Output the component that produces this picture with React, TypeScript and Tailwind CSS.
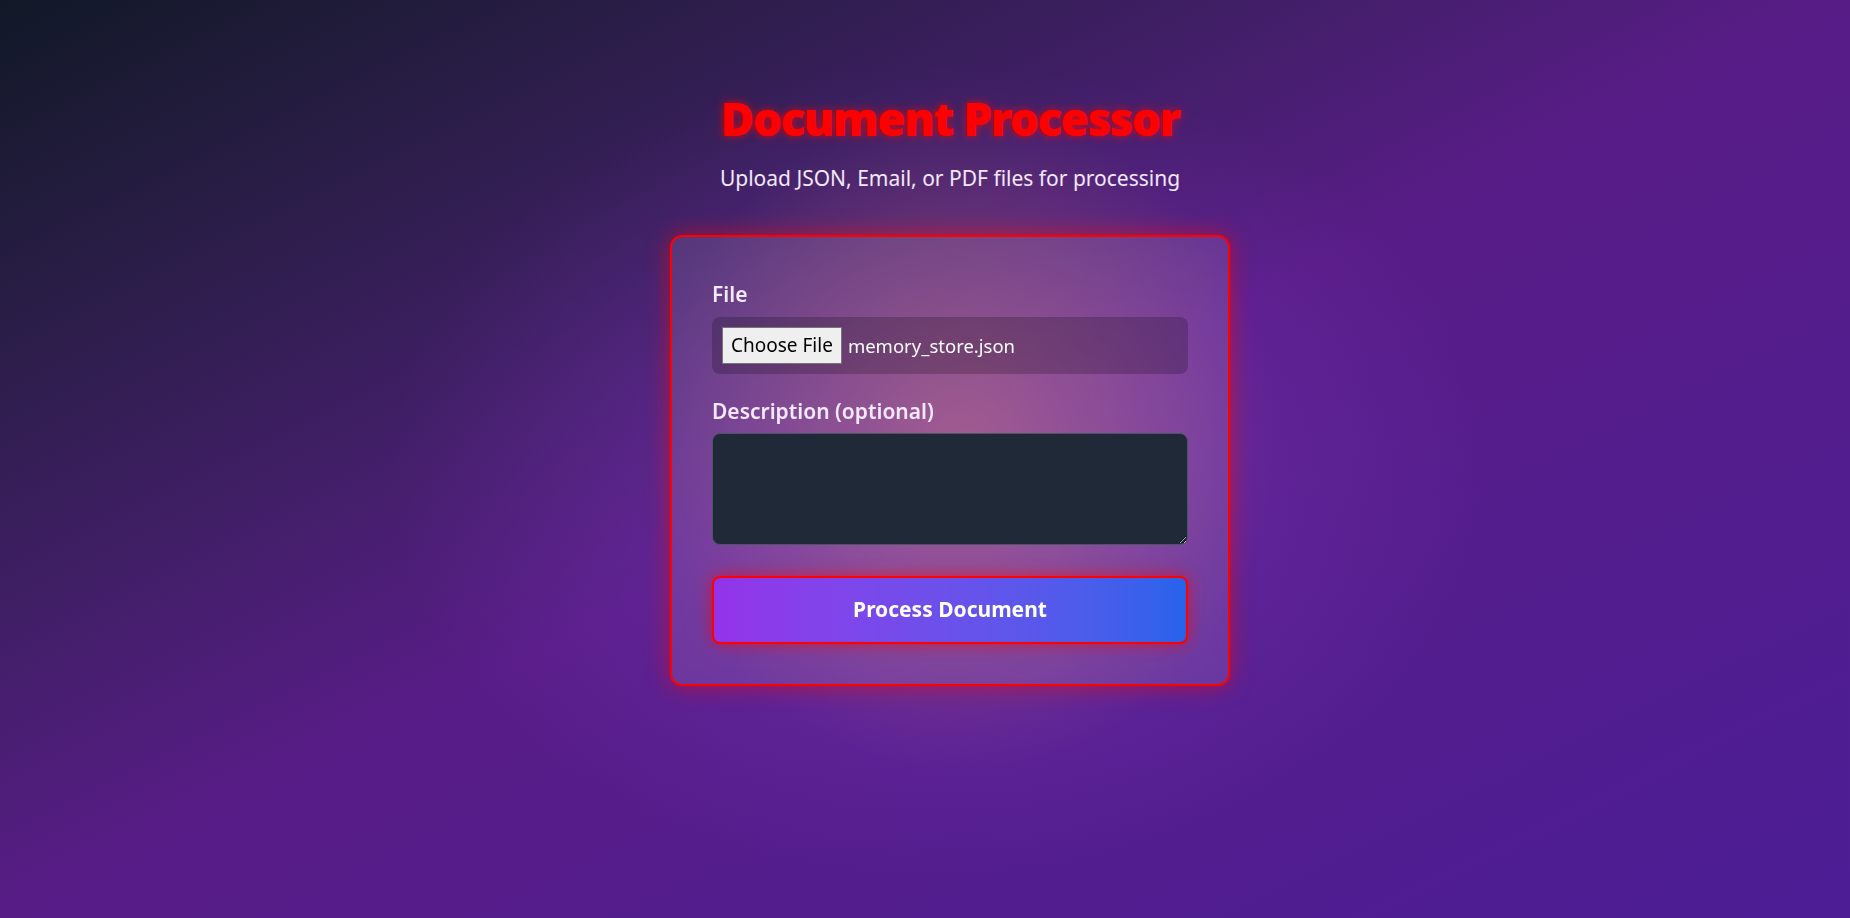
export default function App() {
  return (
    <div className="relative min-h-screen overflow-hidden bg-gradient-to-br from-[#111827] via-[#581c87] to-[#4c1d95] font-['Noto_Sans',sans-serif]">
      {/* purple halo and warm glow behind the card */}
      <div className="pointer-events-none absolute inset-0 bg-[radial-gradient(ellipse_30%_45%_at_51%_52%,rgba(168,85,247,0.28),transparent_100%)]" />
      <div className="pointer-events-none absolute inset-0 bg-[radial-gradient(ellipse_17%_36%_at_52%_48%,rgba(251,146,60,0.3),transparent_100%)]" />

      <div className="relative flex flex-col items-center pl-[50px] pt-[92px]">
        <h1 className="text-[46px] font-black leading-[52px] tracking-[-1.6px] text-[#ff0000] [text-shadow:0_0_8px_rgba(255,0,0,0.75)]">
          Document Processor
        </h1>
        <p className="mt-[20px] text-[21px] leading-7 text-purple-100">
          Upload JSON, Email, or PDF files for processing
        </p>

        <div className="mt-[43px] w-[560px] rounded-xl border-2 border-[#ff0000] bg-white/10 p-10 shadow-[0_0_22px_rgba(255,0,0,0.55)] backdrop-blur-sm">
          <label className="mb-[6px] block text-[21px] font-semibold leading-[34px] text-purple-100">
            File
          </label>
          <div className="flex h-[57px] items-center gap-[6px] rounded-lg bg-black/20 px-[10px]">
            <span className="flex h-[37px] items-center border border-[#767676] bg-[#efefef] px-[8px] text-[19px] text-black">
              Choose File
            </span>
            <span className="text-[18.5px] text-white">memory_store.json</span>
          </div>

          <label className="mt-[20px] mb-[5px] block text-[21px] font-semibold leading-[34px] text-purple-100">
            Description (optional)
          </label>
          <textarea
            rows={4}
            className="block h-[112px] w-full rounded-lg border border-gray-600 bg-[#1f2937] p-2 text-white outline-none"
          />

          <button className="mt-[31px] flex h-[68px] w-full items-center justify-center rounded-lg border-2 border-[#ff0000] bg-gradient-to-r from-[#9333ea] to-[#2563eb] text-[21px] font-bold text-white shadow-[0_0_16px_rgba(255,0,0,0.6)]">
            Process Document
          </button>
        </div>
      </div>
    </div>
  );
}
